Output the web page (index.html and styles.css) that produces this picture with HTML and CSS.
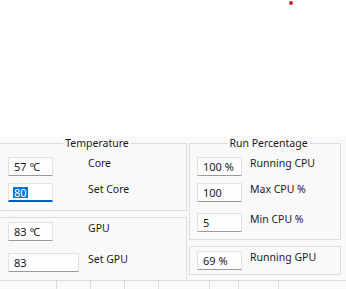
FILE: index.html
```html
<!DOCTYPE html>
<html lang="en">
<head>
    <meta charset="UTF-8">
    <title>Temperature Control</title>
    <link rel="stylesheet" href="styles.css">
</head>
<body>
<div class="canvas">
    <span class="dot"></span>
</div>
<div class="panel">
    <div class="column left">
        <fieldset class="group temp">
            <legend>Temperature</legend>
            <div class="row">
                <div class="box">57 <span class="deg">°C</span></div>
                <span class="label">Core</span>
            </div>
            <div class="row">
                <div class="box focused"><span class="sel">80</span></div>
                <span class="label">Set Core</span>
            </div>
        </fieldset>
        <fieldset class="group gpu">
            <div class="row">
                <div class="box">83 <span class="deg">°C</span></div>
                <span class="label">GPU</span>
            </div>
            <div class="row set-gpu">
                <div class="box wide">83</div>
                <span class="label">Set GPU</span>
            </div>
        </fieldset>
    </div>
    <div class="column right">
        <fieldset class="group run">
            <legend>Run Percentage</legend>
            <div class="row">
                <div class="box">100 %</div>
                <span class="label">Running CPU</span>
            </div>
            <div class="row">
                <div class="box">100</div>
                <span class="label">Max CPU %</span>
            </div>
            <div class="row min-cpu">
                <div class="box">5</div>
                <span class="label">Min CPU %</span>
            </div>
        </fieldset>
        <fieldset class="group run-gpu">
            <div class="row">
                <div class="box">69 %</div>
                <span class="label">Running GPU</span>
            </div>
        </fieldset>
    </div>
</div>
<div class="statusbar">
    <span class="cell" style="width:57px"></span>
    <span class="cell" style="width:34px"></span>
    <span class="cell" style="width:34px"></span>
    <span class="cell" style="width:34px"></span>
    <span class="cell" style="width:51px"></span>
    <span class="cell" style="width:29px"></span>
    <span class="cell" style="width:40px"></span>
</div>
</body>
</html>
```

FILE: styles.css
```css
body {
    margin: 0;
    font-family: "Noto Sans", "Open Sans", sans-serif;
    font-size: 10.5px;
    color: #1b1b1b;
    background-color: #ffffff;
    overflow: hidden;
}
/* Drawing area */
.canvas {
    position: relative;
    height: 136px;
    background-color: #ffffff;
}
.dot {
    position: absolute;
    left: 289px;
    top: 1px;
    width: 4px;
    height: 4px;
    border-radius: 50%;
    background-color: #c0282d;
}
/* Control panel */
.panel {
    display: flex;
    gap: 2px;
    height: 144px;
    background-color: #f9f9f9;
}
.column {
    display: flex;
    flex-direction: column;
    gap: 6px;
}
.left {
    width: 189px;
    margin-left: -2px;
}
.right {
    width: 152px;
}
.group {
    margin: 0;
    border: 1px solid #dcdcdc;
    min-width: 0;
}
.group legend {
    margin: 0 auto;
    padding: 0 2px;
    line-height: 14px;
}
.left .group {
    padding: 7px 0 8px 9px;
}
.right .group {
    padding: 7px 0 7px 7px;
}
.gpu {
    flex: 1;
    padding-top: 4px !important;
}
.run-gpu {
    padding-top: 4px !important;
    padding-bottom: 4px !important;
}
.row {
    display: grid;
    grid-template-columns: 80px auto;
    align-items: start;
}
.right .row {
    grid-template-columns: 53px auto;
}
.row + .row {
    margin-top: 7px;
}
.row.min-cpu {
    margin-top: 11px;
}
.row.set-gpu {
    margin-top: 12px;
}
.label {
    line-height: 12px;
}
/* Text boxes */
.box {
    box-sizing: border-box;
    width: 45px;
    height: 19px;
    padding-left: 5px;
    line-height: 18px;
    font-size: 11px;
    background-color: #fdfdfd;
    border: 1px solid #e3e3e3;
    border-bottom-color: #9a9a9a;
    white-space: nowrap;
}
.box.wide {
    width: 71px;
}
.box.focused {
    border-color: #e3e3e3;
    border-bottom: 2px solid #005fb8;
    background-color: #ffffff;
    padding-left: 4px;
    padding-top: 3px;
    line-height: 11px;
}
.sel {
    display: inline-block;
    padding: 0 1px;
    background-color: #0078d7;
    color: #ffffff;
    line-height: 11px;
}
.deg {
    letter-spacing: -1px;
}
/* Status bar */
.statusbar {
    display: flex;
    height: 9px;
    border-top: 1px solid #dcdcdc;
    background-color: #f9f9f9;
}
.cell {
    border-right: 1px solid #dcdcdc;
    box-sizing: border-box;
}
```
